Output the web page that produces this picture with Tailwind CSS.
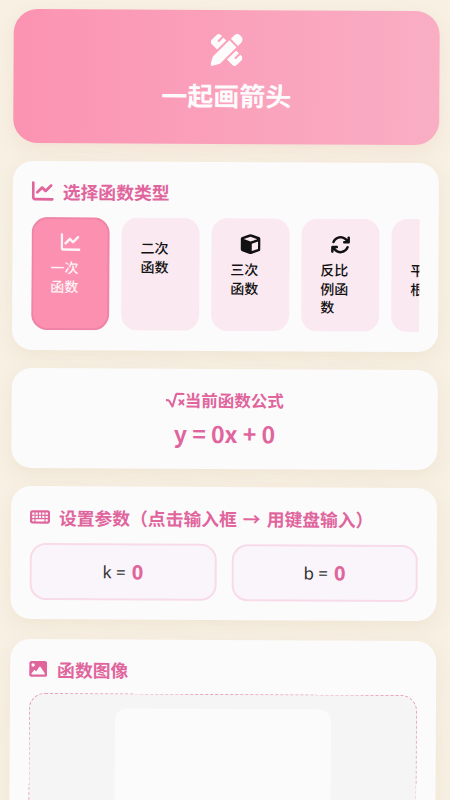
<!DOCTYPE html>
<html lang="zh-CN">
<head>
    <meta charset="UTF-8">
    <meta name="viewport" content="width=device-width, initial-scale=1.0">
    <title>一起画箭头</title>
    <script src="https://cdn.jsdelivr.net/npm/@tailwindcss/browser@4"></script>
</head>
<body class="bg-[#f7f0e3] overflow-hidden h-[800px] font-['Noto_Sans_CJK_SC',sans-serif]">
    <div class="h-[800px] overflow-hidden">
    <div class="rotate-[0.32deg] origin-center pl-[11px] pr-[13px] pt-[10px] flex flex-col gap-[18px]">

        <!-- header -->
        <header class="h-[134px] shrink-0 rounded-[24px] bg-gradient-to-r from-[#fb93b2] to-[#f9aec4] shadow-[0_6px_16px_rgba(230,190,170,0.25)] flex flex-col items-center pt-[24px] text-[#fdfbfc]">
            <svg class="w-8 h-8" viewBox="0 0 512 512" fill="currentColor"><path d="M469.3 19.3l23.4 23.4c25 25 25 65.5 0 90.5l-56.4 56.4L322.3 75.7l56.4-56.4c25-25 65.5-25 90.5 0zM44.9 353.2L299.7 98.3 413.7 212.3 158.8 467.1c-6.7 6.7-15.1 11.6-24.2 14.2l-104 29.7c-8.4 2.4-17.4 .1-23.6-6.1s-8.5-15.2-6.1-23.6l29.7-104c2.6-9.2 7.5-17.5 14.2-24.2zM249.4 103.4L103.4 249.4 16 161.9c-18.7-18.7-18.7-49.1 0-67.9L94.1 16c18.7-18.7 49.1-18.7 67.9 0l19.8 19.8c-.3 .3-.7 .6-1 .9l-64 64c-6.2 6.2-6.2 16.4 0 22.6s16.4 6.2 22.6 0l64-64c.3-.3 .6-.7 .9-1l45.1 45.1zM408.6 262.6l45.1 45.1c-.3 .3-.7 .6-1 .9l-64 64c-6.2 6.2-6.2 16.4 0 22.6s16.4 6.2 22.6 0l64-64c.3-.3 .6-.7 .9-1L496 350.1c18.7 18.7 18.7 49.1 0 67.9L417.9 496c-18.7 18.7-49.1 18.7-67.9 0l-87.4-87.4L408.6 262.6z"/></svg>
            <h1 class="text-[26px] leading-[36px] font-bold mt-[11px]">一起画箭头</h1>
        </header>

        <!-- function type -->
        <section class="h-[189px] shrink-0 rounded-[20px] bg-[#fcfbfc] shadow-[0_6px_16px_rgba(225,205,180,0.3)] px-[19px] pt-[18px]">
            <h2 class="flex items-center gap-[9px] text-[17.8px] leading-[24px] font-bold text-[#e0659c]">
                <svg class="w-[22px] h-[22px]" viewBox="0 0 512 512" fill="currentColor"><path d="M64 64c0-17.7-14.3-32-32-32S0 46.3 0 64V400c0 44.2 35.8 80 80 80H480c17.7 0 32-14.3 32-32s-14.3-32-32-32H80c-8.8 0-16-7.2-16-16V64zm406.6 86.6c12.5-12.5 12.5-32.8 0-45.3s-32.8-12.5-45.3 0L320 210.7l-57.4-57.4c-12.5-12.5-32.8-12.5-45.3 0l-112 112c-12.5 12.5-12.5 32.8 0 45.3s32.8 12.5 45.3 0L240 221.3l57.4 57.4c12.5 12.5 32.8 12.5 45.3 0l128-128z"/></svg>
                选择函数类型
            </h2>
            <div class="flex gap-3 mt-[14px] overflow-hidden">
                <button class="w-[78px] h-[113px] shrink-0 rounded-[16px] border-2 border-[#ef84a6] bg-[#fc90b0] text-[#fdf3f6] flex flex-col items-center pt-[13px]">
                    <svg class="w-[20px] h-[20px]" viewBox="0 0 512 512" fill="currentColor"><path d="M64 64c0-17.7-14.3-32-32-32S0 46.3 0 64V400c0 44.2 35.8 80 80 80H480c17.7 0 32-14.3 32-32s-14.3-32-32-32H80c-8.8 0-16-7.2-16-16V64zm406.6 86.6c12.5-12.5 12.5-32.8 0-45.3s-32.8-12.5-45.3 0L320 210.7l-57.4-57.4c-12.5-12.5-32.8-12.5-45.3 0l-112 112c-12.5 12.5-12.5 32.8 0 45.3s32.8 12.5 45.3 0L240 221.3l57.4 57.4c12.5 12.5 32.8 12.5 45.3 0l128-128z"/></svg>
                    <span class="w-[40px] text-left text-sm font-medium leading-[18.5px] mt-[6px]">一次函数</span>
                </button>
                <button class="w-[78px] h-[113px] shrink-0 rounded-[16px] bg-[#fbe9f1] text-[#111] flex flex-col items-center pt-[21px]">
                    <span class="w-[40px] text-left text-sm font-medium leading-[18.5px]">二次函数</span>
                </button>
                <button class="w-[78px] h-[113px] shrink-0 rounded-[16px] bg-[#fbe9f1] text-[#111] flex flex-col items-center pt-[16px]">
                    <svg class="w-[20px] h-[20px]" viewBox="0 0 512 512" fill="currentColor"><path d="M234.5 5.7c13.9-5 29.1-5 43.1 0l192 68.6C495 83.4 512 107.5 512 134.6V377.4c0 27-17 51.2-42.5 60.3l-192 68.6c-13.9 5-29.1 5-43.1 0l-192-68.6C17 428.6 0 404.5 0 377.4V134.6c0-27 17-51.2 42.5-60.3l192-68.6zM256 66L82.3 128 256 190l173.7-62L256 66zm32 368.6l160-57.1v-188L288 246.6v188z"/></svg>
                    <span class="w-[40px] text-left text-sm font-medium leading-[18.5px] mt-[6px]">三次函数</span>
                </button>
                <button class="w-[78px] h-[113px] shrink-0 rounded-[16px] bg-[#fbe9f1] text-[#111] flex flex-col items-center pt-[16px]">
                    <svg class="w-[20px] h-[20px]" viewBox="0 0 512 512" fill="currentColor"><path d="M105.1 202.6c7.7-21.8 20.2-42.3 37.8-59.8c62.5-62.5 163.8-62.5 226.3 0L386.3 160H352c-17.7 0-32 14.3-32 32s14.3 32 32 32H463.5c0 0 0 0 0 0h.4c17.7 0 32-14.3 32-32V80c0-17.7-14.3-32-32-32s-32 14.3-32 32v35.2L414.4 97.6c-87.5-87.5-229.3-87.5-316.8 0C73.2 122 55.6 150.7 44.8 181.4c-5.9 16.7 2.9 34.9 19.5 40.8s34.9-2.9 40.8-19.5zM39 289.3c-5 1.5-9.8 4.2-13.7 8.2c-4 4-6.7 8.8-8.1 14c-.3 1.2-.6 2.5-.8 3.8c-.3 1.7-.4 3.4-.4 5.1V432c0 17.7 14.3 32 32 32s32-14.3 32-32V396.9l17.6 17.5 0 0c87.5 87.4 229.3 87.4 316.7 0c24.4-24.4 42.1-53.1 52.9-83.7c5.9-16.7-2.9-34.9-19.5-40.8s-34.9 2.9-40.8 19.5c-7.7 21.8-20.2 42.3-37.8 59.8c-62.5 62.5-163.8 62.5-226.3 0l-.1-.1L125.6 352H160c17.7 0 32-14.3 32-32s-14.3-32-32-32H48.4c-1.6 0-3.2 .1-4.8 .3s-3.1 .5-4.6 1z"/></svg>
                    <span class="w-[40px] text-left text-sm font-medium leading-[18.5px] mt-[6px]">反比例函数</span>
                </button>
                <button class="w-[78px] h-[113px] shrink-0 rounded-[16px] bg-[#fbe9f1] text-[#111] flex flex-col items-center pt-[42px]">
                    <span class="w-[40px] text-left text-sm font-medium leading-[18.5px]">平方根</span>
                </button>
            </div>
        </section>

        <!-- formula -->
        <section class="h-[100px] shrink-0 rounded-[20px] bg-[#fcfbfc] shadow-[0_6px_16px_rgba(225,205,180,0.3)] flex flex-col items-center pt-[19px] text-[#e0659c]">
            <h2 class="flex items-center text-[16.5px] leading-[24px] font-bold">
                <svg class="w-[19px] h-[17px]" viewBox="0 0 576 512" fill="currentColor"><path d="M282.6 78.1c8-27.3 33-46.1 61.4-46.1H544c17.7 0 32 14.3 32 32s-14.3 32-32 32H344L238.7 457c-3.6 12.3-14.1 21.2-26.8 22.8s-25.1-4.6-31.5-15.6L77.6 288H32c-17.7 0-32-14.3-32-32s14.3-32 32-32H77.6c22.8 0 43.8 12.1 55.3 31.8l65.2 111.8L282.6 78.1zM393.4 233.4c12.5-12.5 32.8-12.5 45.3 0L480 274.7l41.4-41.4c12.5-12.5 32.8-12.5 45.3 0s12.5 32.8 0 45.3L525.3 320l41.4 41.4c12.5 12.5 12.5 32.8 0 45.3s-32.8 12.5-45.3 0L480 365.3l-41.4 41.4c-12.5 12.5-32.8 12.5-45.3 0s-12.5-32.8 0-45.3L434.7 320l-41.4-41.4c-12.5-12.5-12.5-32.8 0-45.3z"/></svg>
                当前函数公式
            </h2>
            <p class="text-[23px] leading-[32px] font-bold mt-[5px]">y = 0x + 0</p>
        </section>

        <!-- params -->
        <section class="h-[133px] shrink-0 mb-[2px] rounded-[20px] bg-[#fcfbfc] shadow-[0_6px_16px_rgba(225,205,180,0.3)] px-[19px] pt-[19px]">
            <h2 class="flex items-center gap-[9px] text-[17.8px] leading-[24px] font-bold text-[#e0659c] whitespace-nowrap">
                <svg class="w-[20px] h-[18px]" viewBox="0 0 576 512" fill="currentColor" fill-rule="evenodd"><path d="M64 64C28.7 64 0 92.7 0 128V384c0 35.3 28.7 64 64 64H512c35.3 0 64-28.7 64-64V128c0-35.3-28.7-64-64-64H64zM64 128h64v64H64zM160 128h64v64H160zM256 128h64v64H256zM352 128h64v64H352zM448 128h64v64H448zM64 224h64v64H64zM160 224h64v64H160zM256 224h64v64H256zM352 224h64v64H352zM448 224h64v64H448zM64 320h64v64H64zM160 320h256v64H160zM448 320h64v64H448z"/></svg>
                <span>设置参数（点击输入框<span class="mx-[2px]"> → </span>用键盘输入）</span>
            </h2>
            <div class="grid grid-cols-2 gap-[15px] mt-[14px] font-['Noto_Sans',sans-serif]">
                <div class="h-[57px] rounded-[16px] border-2 border-[#f8dbe8] bg-[#faf5fa] flex items-center justify-center gap-[6px] text-[17px] text-[#333]">k = <b class="text-[20px] text-[#e0659c]">0</b></div>
                <div class="h-[57px] rounded-[16px] border-2 border-[#f8dbe8] bg-[#faf5fa] flex items-center justify-center gap-[6px] text-[17px] text-[#333]">b = <b class="text-[20px] text-[#e0659c]">0</b></div>
            </div>
        </section>

        <!-- graph -->
        <section class="h-[400px] shrink-0 rounded-[20px] bg-[#fcfbfc] shadow-[0_6px_16px_rgba(225,205,180,0.3)] px-[19px] pt-[18px]">
            <h2 class="flex items-center gap-[10px] text-[17.8px] leading-[24px] font-bold text-[#e0659c]">
                <svg class="w-[18px] h-[18px]" viewBox="0 0 512 512" fill="currentColor"><path d="M0 96C0 60.7 28.7 32 64 32H448c35.3 0 64 28.7 64 64V416c0 35.3-28.7 64-64 64H64c-35.3 0-64-28.7-64-64V96zM323.8 202.5c-4.5-6.6-11.9-10.5-19.8-10.5s-15.4 3.9-19.8 10.5l-87 127.6L170.7 297c-4.6-5.7-11.5-9-18.7-9s-14.2 3.3-18.7 9l-64 80c-5.8 7.2-6.9 17.1-2.9 25.4s12.4 13.6 21.6 13.6h96 32H424c8.9 0 17.1-4.9 21.2-12.8s3.6-17.4-1.4-24.7l-120-176zM112 192a48 48 0 1 0 0-96 48 48 0 1 0 0 96z"/></svg>
                函数图像
            </h2>
            <div class="h-[300px] mt-[12px] rounded-[16px] border border-dashed border-[#ec9fc0] bg-[#f6f5f6] flex justify-center pt-[14px]">
                <div class="w-[216px] h-[216px] rounded-[12px] bg-[#fcfbfc]"></div>
            </div>
        </section>

    </div>
    </div>
</body>
</html>
